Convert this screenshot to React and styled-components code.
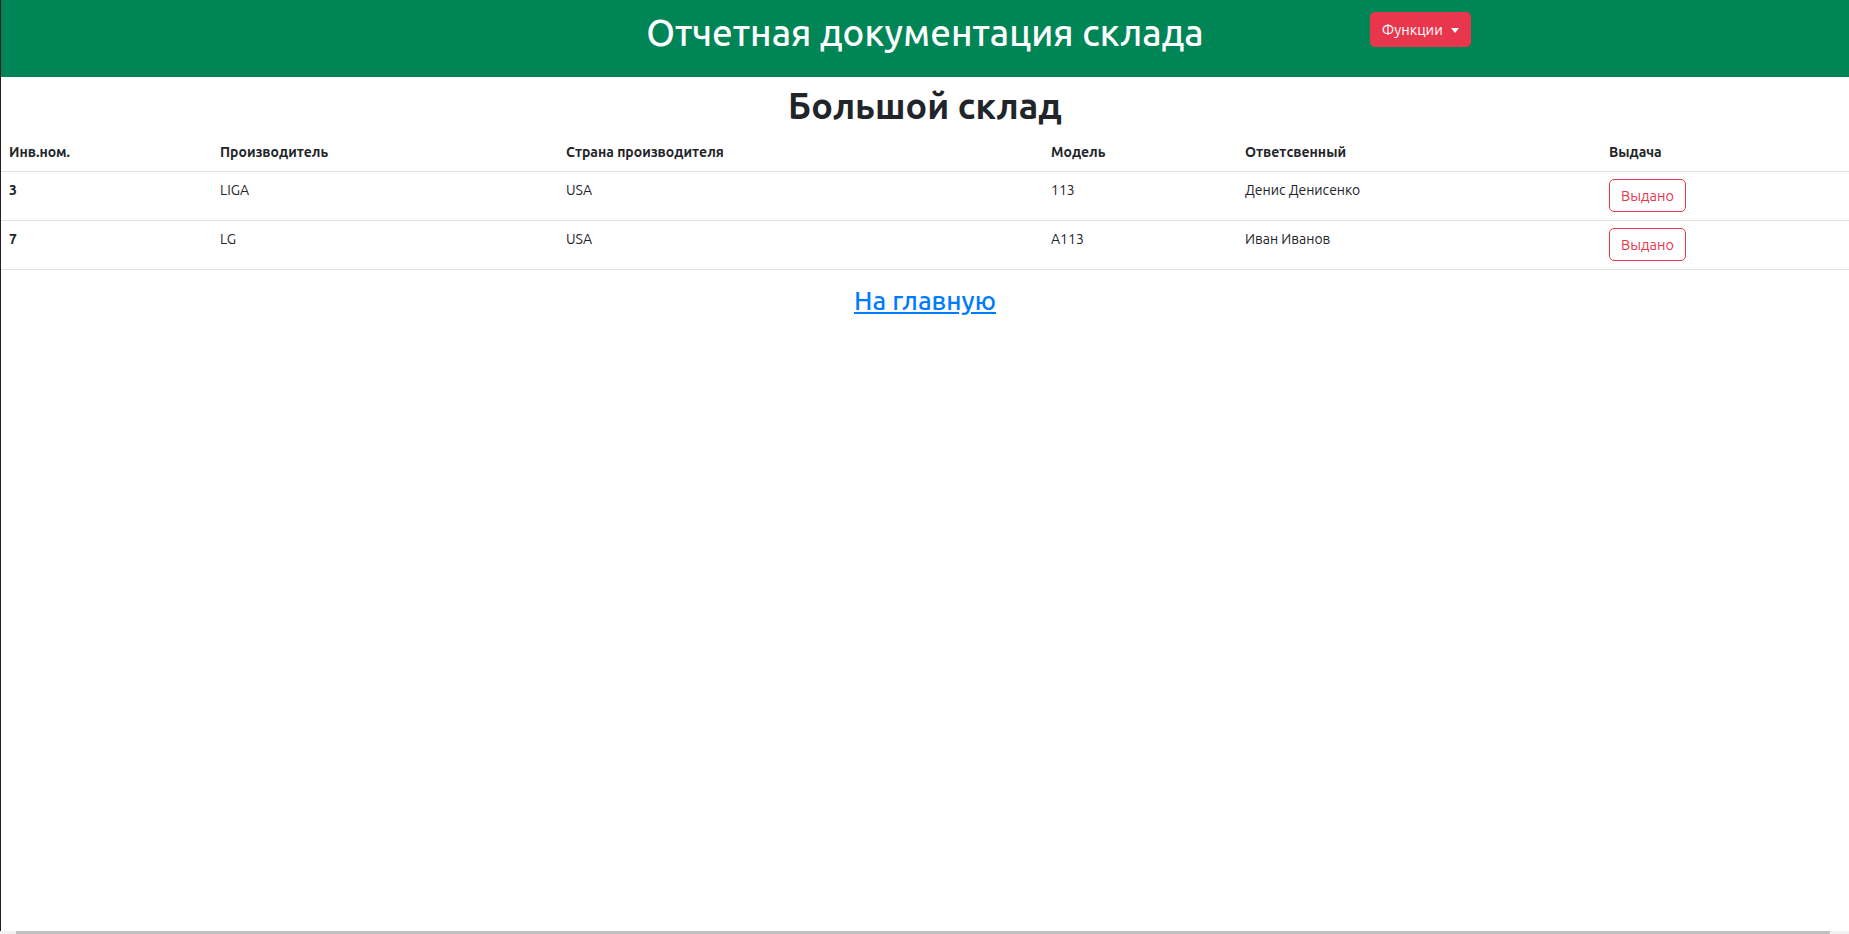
import React from "react";
import styled, { createGlobalStyle } from "styled-components";

const GlobalStyle = createGlobalStyle`
  html, body { margin: 0; padding: 0; background: #fff; }
  body {
    font-family: Ubuntu, Lato, "Noto Sans", "DejaVu Sans", sans-serif;
    color: #212529;
    border-left: 1px solid #2b1a25;
    min-height: 934px;
    box-sizing: border-box;
  }
  * { box-sizing: border-box; }
`;

const Header = styled.header`
  display: grid;
  grid-template-columns: 1fr auto 1fr;
  height: 77px;
  background: #008557;
`;

const SiteTitle = styled.h1`
  grid-column: 2;
  margin: 11px 0 0;
  align-self: start;
  font-size: 36.8px;
  font-weight: 500;
  line-height: 44px;
  color: #fff;
  white-space: nowrap;
`;

const MenuButton = styled.button`
  grid-column: 3;
  justify-self: start;
  align-self: start;
  margin: 12px 0 0 166px;
  height: 35px;
  padding: 0 12px;
  display: inline-flex;
  align-items: center;
  gap: 8px;
  background: #e8364d;
  color: #fff;
  border: none;
  border-radius: 5px;
  font-family: inherit;
  font-size: 14.5px;
  cursor: pointer;
`;

const Caret = styled.span`
  width: 0;
  height: 0;
  border-left: 4px solid transparent;
  border-right: 4px solid transparent;
  border-top: 5px solid #fff;
  margin-top: 1px;
`;

const Main = styled.main`
  display: flex;
  flex-direction: column;
  padding-top: 7px;
`;

const Heading = styled.h2`
  margin: 0 0 7px;
  text-align: center;
  font-size: 36px;
  font-weight: 600;
  line-height: 43px;
  color: #212529;
`;

const Table = styled.table`
  width: 100%;
  border-collapse: collapse;
  font-size: 14px;
  line-height: 21px;
`;

const Th = styled.th`
  text-align: left;
  font-weight: 700;
  padding: 8px;
  vertical-align: top;
  border-bottom: 1px solid #dee2e6;
  width: ${(p) => p.$w || "auto"};
`;

const Td = styled.td`
  padding: 8px;
  vertical-align: top;
  border-bottom: 1px solid #dee2e6;
  font-weight: ${(p) => (p.$bold ? 700 : 400)};
`;

const IssueButton = styled.button`
  height: 33px;
  padding: 0 11px;
  margin-top: -1px;
  background: #fff;
  color: #e8364d;
  border: 1px solid #e8364d;
  border-radius: 5px;
  font-family: inherit;
  font-size: 14.5px;
  cursor: pointer;
`;

const HomeLink = styled.a`
  align-self: center;
  margin-top: 12px;
  font-size: 26px;
  font-weight: 500;
  line-height: 37px;
  color: #007bff;
  text-decoration: underline;
`;

const Scrollbar = styled.div`
  position: fixed;
  left: 0;
  right: 0;
  bottom: 0;
  height: 3px;
  background: #f1f1f1;
  padding: 0 19px 0 16px;
  display: flex;
`;

const Thumb = styled.div`
  flex: 1;
  background: #c1c1c1;
`;

const rows = [
  { id: "3", maker: "LIGA", country: "USA", model: "113", person: "Денис Денисенко" },
  { id: "7", maker: "LG", country: "USA", model: "A113", person: "Иван Иванов" },
];

export default function App() {
  return (
    <>
      <GlobalStyle />
      <Header>
        <SiteTitle>Отчетная документация склада</SiteTitle>
        <MenuButton>
          Функции <Caret />
        </MenuButton>
      </Header>
      <Main>
        <Heading>Большой склад</Heading>
        <Table>
          <thead>
            <tr>
              <Th $w="211px">Инв.ном.</Th>
              <Th $w="346px">Производитель</Th>
              <Th $w="485px">Страна производителя</Th>
              <Th $w="194px">Модель</Th>
              <Th $w="364px">Ответсвенный</Th>
              <Th>Выдача</Th>
            </tr>
          </thead>
          <tbody>
            {rows.map((r) => (
              <tr key={r.id}>
                <Td $bold>{r.id}</Td>
                <Td>{r.maker}</Td>
                <Td>{r.country}</Td>
                <Td>{r.model}</Td>
                <Td>{r.person}</Td>
                <Td>
                  <IssueButton>Выдано</IssueButton>
                </Td>
              </tr>
            ))}
          </tbody>
        </Table>
        <HomeLink href="#">На главную</HomeLink>
      </Main>
      <Scrollbar>
        <Thumb />
      </Scrollbar>
    </>
  );
}
